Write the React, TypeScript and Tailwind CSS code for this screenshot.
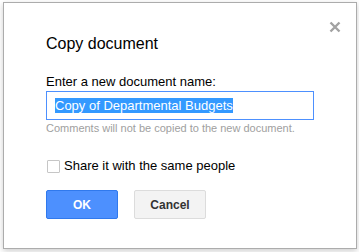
export default function App() {
  return (
    <div className="w-[359px] h-[252px] bg-white overflow-hidden font-['Liberation_Sans',Arial,sans-serif] pt-[2px] pl-[3px]">
      {/* dialog */}
      <div className="relative w-[354px] h-[247px] bg-white border border-[#acacac] shadow-[0_2px_6px_rgba(0,0,0,0.2)] pl-[42px] pt-[31px]">
        {/* close */}
        <svg className="absolute top-[18px] right-[15px]" width="12" height="12" viewBox="0 0 12 12">
          <path d="M1.5 1.5 L10.5 10.5 M10.5 1.5 L1.5 10.5" stroke="#a2a2a2" strokeWidth="2.4" />
        </svg>

        <h1 className="text-[16px] leading-[20px] text-black">Copy document</h1>

        <p className="mt-[20px] text-[13px] leading-[16px] text-black">Enter a new document name:</p>

        {/* input */}
        <div className="mt-[1px] w-[268px] h-[29px] border border-[#4d90fe] flex items-center">
          <span className="ml-[8px] bg-[#3399ff] text-white text-[13px] leading-[15px]">Copy of Departmental Budgets</span>
        </div>

        <p className="mt-[2px] text-[11px] leading-[13px] text-[#a0a0a0]">Comments will not be copied to the new document.</p>

        <label className="mt-[23px] flex items-center gap-[4px] text-[13px] leading-[16px] text-black">
          <span className="ml-[1px] w-[13px] h-[13px] border border-[#c6c6c6] rounded-[1px] bg-white" />
          Share it with the same people
        </label>

        {/* buttons */}
        <div className="mt-[16px] flex gap-[16px]">
          <button className="w-[72px] h-[29px] bg-[#4d90fe] border border-[#3079ed] rounded-[2px] text-white text-[12px] font-bold">OK</button>
          <button className="w-[72px] h-[29px] bg-[#f3f3f3] border border-[#dcdcdc] rounded-[2px] text-[#333] text-[12px] font-bold">Cancel</button>
        </div>
      </div>
    </div>
  );
}
